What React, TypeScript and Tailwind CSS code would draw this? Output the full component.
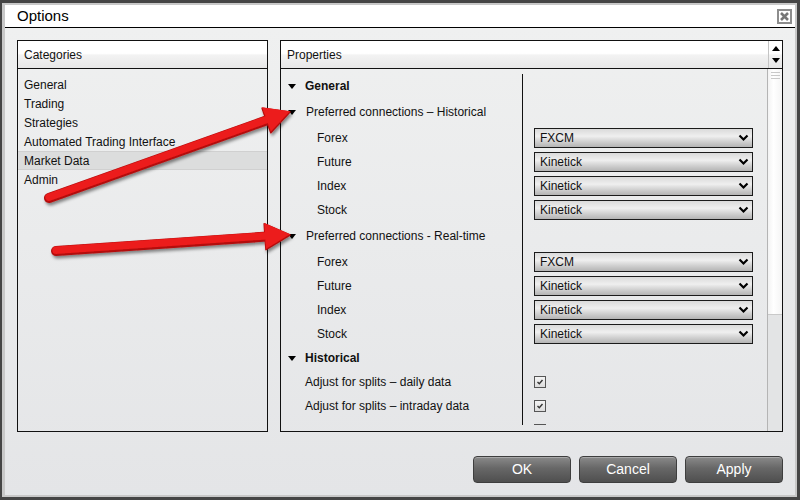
import React from "react";

type Connection = { name: string; value: string };

const historical: Connection[] = [
  { name: "Forex", value: "FXCM" },
  { name: "Future", value: "Kinetick" },
  { name: "Index", value: "Kinetick" },
  { name: "Stock", value: "Kinetick" },
];

const realtime: Connection[] = [
  { name: "Forex", value: "FXCM" },
  { name: "Future", value: "Kinetick" },
  { name: "Index", value: "Kinetick" },
  { name: "Stock", value: "Kinetick" },
];

const categories = ["General", "Trading", "Strategies", "Automated Trading Interface", "Market Data", "Admin"];

const headerBg =
  "bg-[linear-gradient(to_bottom,#ffffff_0%,#ffffff_46%,#f3f3f3_52%,#e7e7e7_100%)]";

const Caret = () => (
  <span className="ml-[7px] mr-[9px] inline-block w-0 h-0 border-l-[4px] border-r-[4px] border-t-[5px] border-l-transparent border-r-transparent border-t-black" />
);

const Dropdown = ({ value }: { value: string }) => (
  <div className="ml-[11px] w-[219px] h-[20px] border border-[#1b1b1b] flex items-center justify-between pl-[5px] pr-[3px] bg-[linear-gradient(to_bottom,#dadada_0%,#efefef_40%,#d0d0d0_70%,#b4b4b4_100%)] text-[12px] text-[#111]">
    <span>{value}</span>
    <svg width="11" height="8" viewBox="0 0 11 8">
      <path d="M1.5 1.5 L5.5 5.5 L9.5 1.5" fill="none" stroke="#000" strokeWidth="2.2" />
    </svg>
  </div>
);

const Checkbox = ({ checked = true }: { checked?: boolean }) => (
  <div className="ml-[11px] w-[12px] h-[12px] border border-[#555] bg-[linear-gradient(to_bottom,#f4f4f4,#dcdcdc)] flex items-center justify-center">
    {checked && (
      <svg width="8" height="8" viewBox="0 0 8 8">
        <path d="M1.5 4 L3.3 5.8 L6.5 2" fill="none" stroke="#333" strokeWidth="1.4" />
      </svg>
    )}
  </div>
);

// one line of the property grid: label column, divider, value column
const PropRow = ({
  h,
  label,
  children,
}: {
  h: string;
  label?: React.ReactNode;
  children?: React.ReactNode;
}) => (
  <div className={`flex ${h}`}>
    <div className="w-[242px] shrink-0 border-r border-[#111] flex items-center text-[12px] text-[#111]">
      {label}
    </div>
    <div className="flex-1 flex items-center">{children}</div>
  </div>
);

const Arrow = ({ x1, y1, x2, y2 }: { x1: number; y1: number; x2: number; y2: number }) => {
  const dx = x2 - x1;
  const dy = y2 - y1;
  const len = Math.hypot(dx, dy);
  const ux = dx / len;
  const uy = dy / len;
  const px = -uy;
  const py = ux;
  const headL = 25;
  const headW = 13;
  const bx = x2 - ux * headL;
  const by = y2 - uy * headL;
  const head = `${x2},${y2} ${bx + px * headW},${by + py * headW} ${bx - px * headW},${by - py * headW}`;
  return (
    <g filter="url(#arrowShadow)">
      <line x1={x1} y1={y1} x2={bx + ux * 2} y2={by + uy * 2} stroke="#b30d0d" strokeWidth="10" strokeLinecap="round" />
      <polygon points={head} fill="#b30d0d" stroke="#b30d0d" strokeWidth="1.5" strokeLinejoin="round" />
      <line x1={x1} y1={y1 - 0.8} x2={bx + ux * 2} y2={by + uy * 2 - 0.8} stroke="#ec1b1b" strokeWidth="7.5" strokeLinecap="round" />
      <polygon points={head} fill="#ec1b1b" transform="translate(0,-0.8)" />
    </g>
  );
};

export default function App() {
  return (
    <div className="relative w-[800px] h-[500px] bg-[#454545] pt-[3px] pl-[2px] pr-[3px] pb-[3px] font-['Liberation_Sans',Arial,sans-serif] overflow-hidden">
      <div className="h-full border-t-2 border-b-2 border-r-2 border-l-[3px] border-[#c8c8c8] flex flex-col">
        {/* title bar */}
        <div className="h-[22px] bg-white flex items-center justify-between pl-[12px] pr-[3px] border-b border-black box-content">
          <span className="text-[15px] text-black">Options</span>
          <div className="w-[15px] h-[15px] border-2 border-[#8d8d8d] bg-white flex items-center justify-center">
            <svg width="9" height="9" viewBox="0 0 9 9">
              <path d="M1 1 L8 8 M8 1 L1 8" stroke="#777" strokeWidth="2.6" />
            </svg>
          </div>
        </div>

        {/* body */}
        <div className="flex-1 bg-[linear-gradient(to_bottom,#eff0f0,#e4e5e7)] pt-[12px] px-[12px] flex flex-col">
          <div className="flex gap-[12px] h-[392px]">
            {/* categories */}
            <div className="w-[251px] border border-[#111] flex flex-col">
              <div className={`h-[28px] border-b border-[#111] ${headerBg} flex items-center pl-[6px] text-[12px] text-[#111]`}>
                Categories
              </div>
              <div className="pt-[6px] flex flex-col">
                {categories.map((c) => (
                  <div
                    key={c}
                    className={`h-[19px] flex items-center pl-[6px] text-[12px] text-[#111] ${
                      c === "Market Data" ? "bg-[#dcdddd] border-t border-b border-[#d0d0d0]" : ""
                    }`}
                  >
                    {c}
                  </div>
                ))}
              </div>
            </div>

            {/* properties */}
            <div className="w-[503px] border border-[#111] flex flex-col">
              <div className={`h-[28px] border-b border-[#111] ${headerBg} flex`}>
                <div className="flex-1 flex items-center pl-[6px] text-[12px] text-[#111]">Properties</div>
                <div className="w-[14px] border-l border-[#c4c4c4] flex flex-col items-center justify-around py-[2px]">
                  <span className="w-0 h-0 border-l-[4px] border-r-[4px] border-b-[5px] border-l-transparent border-r-transparent border-b-black" />
                  <span className="w-0 h-0 border-l-[4px] border-r-[4px] border-t-[5px] border-l-transparent border-r-transparent border-t-black" />
                </div>
              </div>
              <div className="flex-1 flex min-h-0">
                <div className="flex-1 pt-[5px]">
                  <div className="h-[351px] overflow-hidden">
                    <PropRow h="h-[24px]" label={<><Caret /><b>General</b></>} />
                    <PropRow h="h-[28px]" label={<><Caret /><span className="ml-px">Preferred connections – Historical</span></>} />
                    {historical.map((r) => (
                      <PropRow key={"h" + r.name} h="h-[24px]" label={<span className="pl-[36px]">{r.name}</span>}>
                        <Dropdown value={r.value} />
                      </PropRow>
                    ))}
                    <PropRow h="h-[28px]" label={<><Caret /><span className="ml-px">Preferred connections - Real-time</span></>} />
                    {realtime.map((r) => (
                      <PropRow key={"r" + r.name} h="h-[24px]" label={<span className="pl-[36px]">{r.name}</span>}>
                        <Dropdown value={r.value} />
                      </PropRow>
                    ))}
                    <PropRow h="h-[24px]" label={<><Caret /><b>Historical</b></>} />
                    <PropRow h="h-[24px]" label={<span className="pl-[24px]">Adjust for splits – daily data</span>}>
                      <Checkbox />
                    </PropRow>
                    <PropRow h="h-[24px]" label={<span className="pl-[24px]">Adjust for splits – intraday data</span>}>
                      <Checkbox />
                    </PropRow>
                    <PropRow h="h-[24px]">
                      <Checkbox checked={false} />
                    </PropRow>
                  </div>
                </div>
                {/* scrollbar */}
                <div className="w-[15px] border-l border-[#b4b4b4] bg-[#e3e4e5] flex flex-col">
                  <div className="h-[246px] bg-[linear-gradient(to_right,#f3f3f3,#ffffff_40%,#f4f4f4)] border-b border-[#c9c9c9] flex flex-col items-center pt-[3px] gap-[2px]">
                    <span className="w-[9px] h-px bg-[#c8c8c8]" />
                    <span className="w-[9px] h-px bg-[#c8c8c8]" />
                    <span className="w-[9px] h-px bg-[#c8c8c8]" />
                  </div>
                </div>
              </div>
            </div>
          </div>

          {/* buttons */}
          <div className="mt-[24px] flex justify-end gap-[8px]">
            {["OK", "Cancel", "Apply"].map((b) => (
              <button
                key={b}
                className="w-[98px] h-[27px] rounded-[4px] border border-[#3e3e3e] bg-[linear-gradient(to_bottom,#8a8a8a,#676767_45%,#4f4f4f)] text-white text-[14px] shadow-[inset_0_1px_0_#a8a8a8]"
              >
                {b}
              </button>
            ))}
          </div>
        </div>
      </div>

      {/* callout arrows */}
      <svg className="absolute inset-0 pointer-events-none" width="800" height="500">
        <defs>
          <filter id="arrowShadow" x="-20%" y="-50%" width="140%" height="200%">
            <feDropShadow dx="1.5" dy="2.5" stdDeviation="1.8" floodColor="#000" floodOpacity="0.45" />
          </filter>
        </defs>
        <Arrow x1={49} y1={198} x2={290} y2={112} />
        <Arrow x1={56} y1={251} x2={290} y2={235} />
      </svg>
    </div>
  );
}
